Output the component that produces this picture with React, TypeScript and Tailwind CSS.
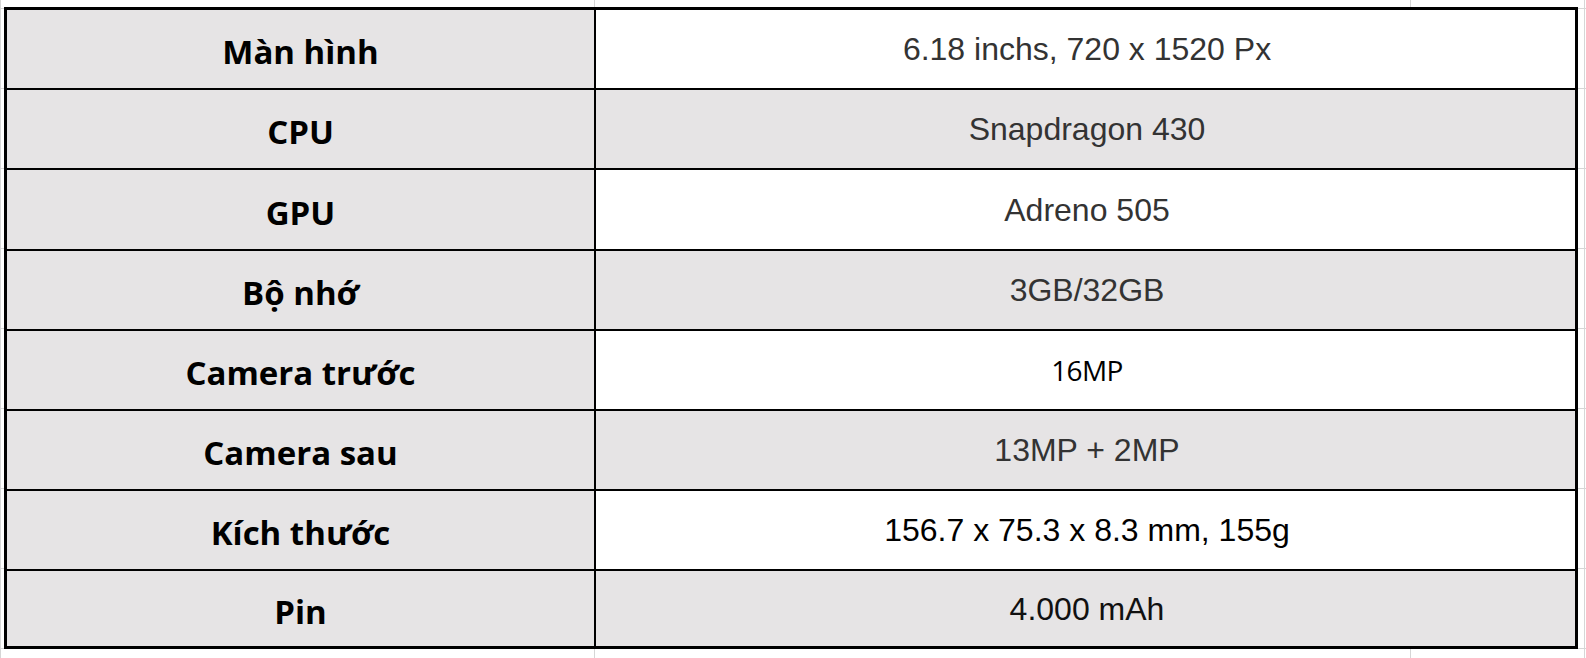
const rows = [
  { label: "Màn hình", value: "6.18 inchs, 720 x 1520 Px", h: "h-[78px]", shade: false, tone: "text-[#333333]", calibri: false },
  { label: "CPU", value: "Snapdragon 430", h: "h-[78px]", shade: true, tone: "text-[#333333]", calibri: false },
  { label: "GPU", value: "Adreno 505", h: "h-[79px]", shade: false, tone: "text-[#333333]", calibri: false },
  { label: "Bộ nhớ", value: "3GB/32GB", h: "h-[78px]", shade: true, tone: "text-[#333333]", calibri: false },
  { label: "Camera trước", value: "16MP", h: "h-[78px]", shade: false, tone: "text-black", calibri: true },
  { label: "Camera sau", value: "13MP + 2MP", h: "h-[78px]", shade: true, tone: "text-[#333333]", calibri: false },
  { label: "Kích thước", value: "156.7 x 75.3 x 8.3 mm, 155g", h: "h-[78px]", shade: false, tone: "text-black", calibri: false },
  { label: "Pin", value: "4.000 mAh", h: "h-[75px]", shade: true, tone: "text-[#111111]", calibri: false },
]

export default function App() {
  return (
    <div className="w-[1586px] h-[658px] bg-white pt-[7px] pl-[4px] bg-[linear-gradient(to_right,#d6d6d6_0_1px,transparent_1px_594px,#d6d6d6_594px_595px,transparent_595px_1410px,#d6d6d6_1410px_1411px,transparent_1411px_1584px,#d6d6d6_1584px_1585px,transparent_1585px),repeating-linear-gradient(to_bottom,transparent_0_8px,#d6d6d6_8px_9px,transparent_9px_80px)]">
      <div className="w-[1574px] border-[3px] border-black bg-white flex flex-col">
        {rows.map((r, i) => (
          <div key={r.label} className={`${r.h} flex ${i > 0 ? "border-t-2 border-black box-content" : ""}`}>
            <div className="w-[587px] shrink-0 border-r-2 border-black box-content bg-[#e6e4e5] flex items-center justify-center pt-[5px]">
              <span className="font-['Open_Sans',sans-serif] font-bold text-[33px] leading-none text-black">
                {r.label}
              </span>
            </div>
            <div className={`flex-1 flex items-center justify-center pl-[3px] ${r.shade ? "bg-[#e6e4e5]" : "bg-white"}`}>
              {r.calibri ? (
                <span className="font-['Open_Sans',sans-serif] text-[28px] leading-none text-black tracking-[-0.6px]">
                  {r.value}
                </span>
              ) : (
                <span className={`font-['Liberation_Sans',Arial,sans-serif] text-[32px] leading-none ${r.tone}`}>
                  {r.value}
                </span>
              )}
            </div>
          </div>
        ))}
      </div>
    </div>
  )
}
